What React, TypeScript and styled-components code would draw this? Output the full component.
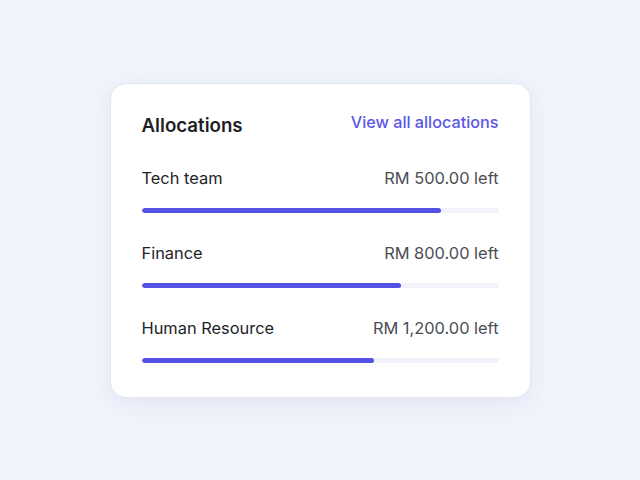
import React from "react";
import styled, { createGlobalStyle } from "styled-components";

const Global = createGlobalStyle`
  html, body { margin: 0; padding: 0; }
  body {
    background: #f1f4fc;
    font-family: Inter, "Noto Sans", sans-serif;
    -webkit-font-smoothing: antialiased;
  }
`;

const Page = styled.div`
  min-height: 100vh;
  display: flex;
  align-items: center;
  justify-content: center;
`;

const Card = styled.section`
  width: 421px;
  box-sizing: border-box;
  background: #ffffff;
  border: 1px solid #e4e6f0;
  border-radius: 16px;
  box-shadow: 0 6px 24px rgba(40, 50, 110, 0.07);
  padding: 29px 31px 34px;
  display: flex;
  flex-direction: column;
`;

const Header = styled.div`
  display: flex;
  justify-content: space-between;
  align-items: flex-start;
  margin-bottom: 30px;
`;

const Title = styled.h2`
  margin: 0;
  font-size: 18.7px;
  line-height: 24px;
  font-weight: 600;
  color: #1e1f24;
  padding-top: 1px;
`;

const Link = styled.a`
  font-size: 16.2px;
  line-height: 20px;
  font-weight: 500;
  color: #5b57e6;
  text-decoration: none;
  cursor: pointer;
  margin-top: -1px;
`;

const List = styled.div`
  display: flex;
  flex-direction: column;
  gap: 30px;
`;

const Item = styled.div`
  display: flex;
  flex-direction: column;
  gap: 20px;
`;

const Row = styled.div`
  display: flex;
  justify-content: space-between;
  align-items: center;
  font-size: 16.4px;
  line-height: 20px;
`;

const Label = styled.span`
  color: #222328;
  font-weight: 400;
`;

const Amount = styled.span`
  color: #4b4d55;
`;

const Track = styled.div`
  height: 5px;
  border-radius: 3px;
  background: #f2f3fa;
  overflow: hidden;
`;

const Fill = styled.div`
  height: 100%;
  border-radius: 3px;
  background: #5551e4;
`;

const data = [
  { name: "Tech team", left: "RM 500.00 left", pct: 84 },
  { name: "Finance", left: "RM 800.00 left", pct: 72.8 },
  { name: "Human Resource", left: "RM 1,200.00 left", pct: 65.2 },
];

export default function App() {
  return (
    <>
      <Global />
      <Page>
        <Card>
          <Header>
            <Title>Allocations</Title>
            <Link>View all allocations</Link>
          </Header>
          <List>
            {data.map((d) => (
              <Item key={d.name}>
                <Row>
                  <Label>{d.name}</Label>
                  <Amount>{d.left}</Amount>
                </Row>
                <Track>
                  <Fill style={{ width: `${d.pct}%` }} />
                </Track>
              </Item>
            ))}
          </List>
        </Card>
      </Page>
    </>
  );
}
